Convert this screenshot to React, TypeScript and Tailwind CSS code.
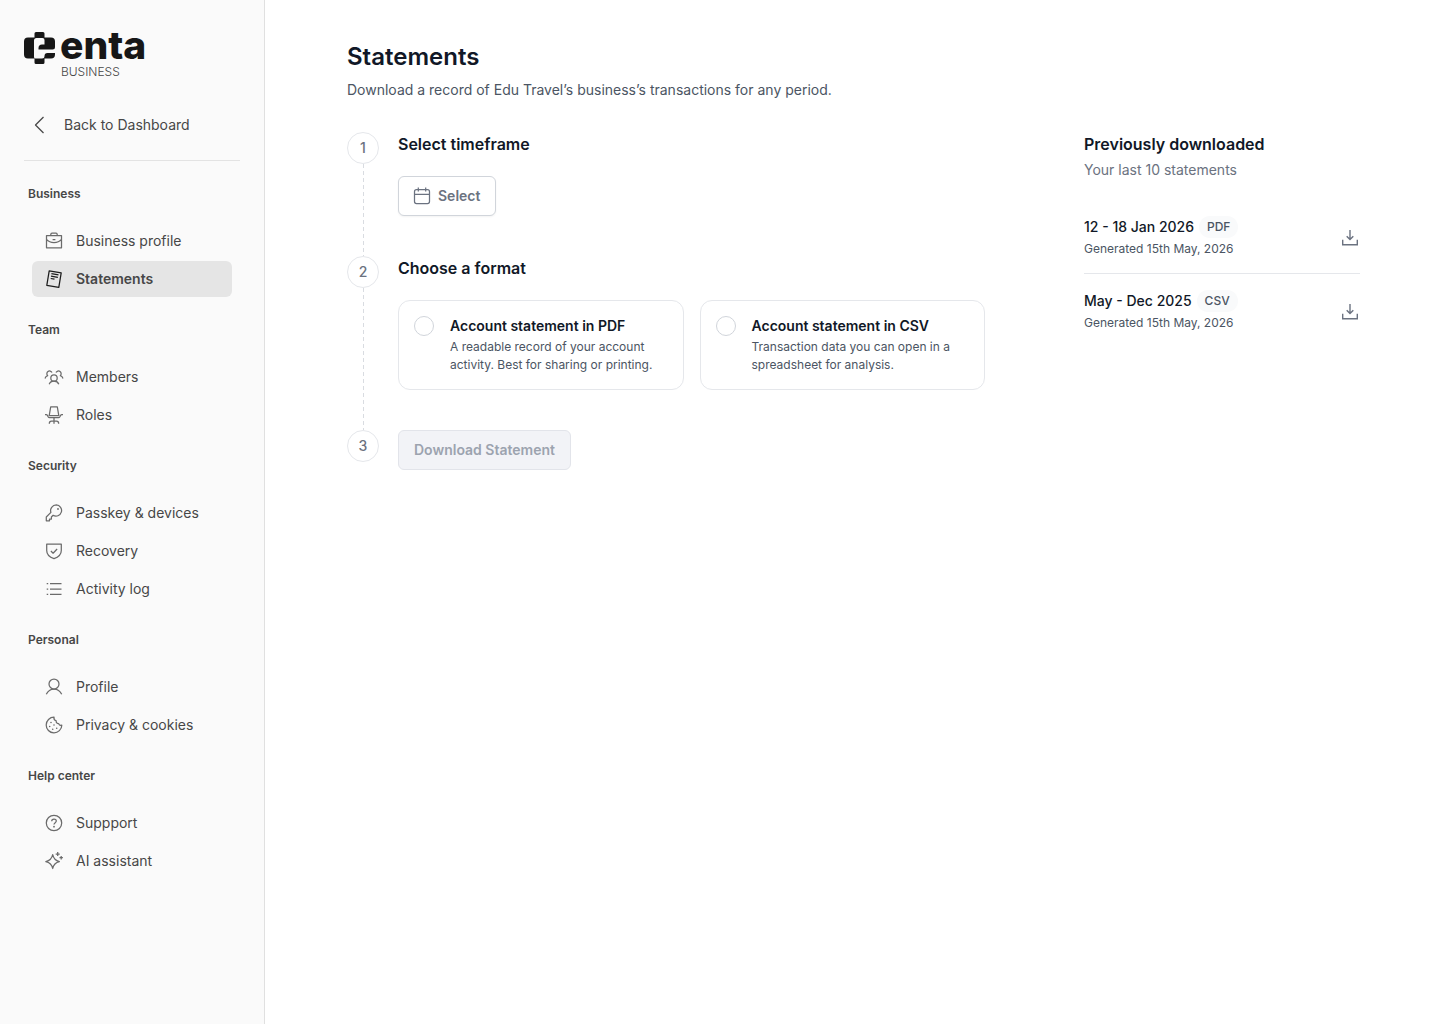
import { useState } from "react";
import type { ReactNode } from "react";

type NavItem = { label: string; icon: ReactNode; active?: boolean };
type NavGroup = { title: string; items: NavItem[] };

function Icon({ children }: { children: ReactNode }) {
  return (
    <svg
      viewBox="0 0 20 20"
      className="size-5 shrink-0"
      fill="none"
      stroke="currentColor"
      strokeWidth="1.25"
      strokeLinejoin="round"
      aria-hidden="true"
    >
      {children}
    </svg>
  );
}

const NAV: NavGroup[] = [
  {
    title: "Business",
    items: [
      {
        label: "Business profile",
        icon: (
          <Icon>
            <path d="M2.5 4.5h15v12.3h-15zM6.8 4.5V3.4c0-.7.5-1.2 1.2-1.2h4c.7 0 1.2.5 1.2 1.2v1.1M2.5 8.3c1.8 2.1 4.4 3.2 7.5 3.2s5.7-1.1 7.5-3.2M8.6 8.7h2.8" />
          </Icon>
        ),
      },
      {
        label: "Statements",
        active: true,
        icon: (
          <Icon>
            <path d="M5.2 1.9 17.2 3.8 14.8 18.3 2.8 16.3zM7.4 4.7l7.1 1.2M7 7.1l6.9 1.2M6.7 9.5l3.8.7" />
          </Icon>
        ),
      },
    ],
  },
  {
    title: "Team",
    items: [
      {
        label: "Members",
        icon: (
          <Icon>
            <circle cx="10" cy="11" r="3.2" />
            <path d="M5.2 17.2c.7-1.9 2.5-3 4.800-3s4.100 1.100 4.800 3M1 11.500c.4-1.500 1.300-2.500 2.700-2.900a2.700 2.700 0 1 1 4.300-3.100M19 11.500c-.4-1.500-1.300-2.500-2.700-2.900a2.700 2.700 0 1 0-4.300-3.100" />
          </Icon>
        ),
      },
      {
        label: "Roles",
        icon: (
          <Icon>
            <path d="M6.7 1.8h6.600l1.500 8.900H5.200zM1 9.500h1.200c.7 0 1 .4 1.300 1l.6 1.300c.3.6.7.9 1.400.9h9c.7 0 1.100-.3 1.400-.9l.6-1.300c.3-.6.6-1 1.300-1H19M10 12.700v6M5.300 18.700c0-1.700.7-2.500 2.200-2.500h5c1.500 0 2.200.8 2.200 2.500" />
          </Icon>
        ),
      },
    ],
  },
  {
    title: "Security",
    items: [
      {
        label: "Passkey & devices",
        icon: (
          <Icon>
            <path d="M12.300 1.900a5.700 5.700 0 0 0-5.400 7.500L2.300 14v3.800h3.200V16h1.900v-2l1.700-1.700a5.600 5.600 0 1 0 3.200-10.400z" />
            <circle cx="14" cy="6" r=".9" fill="currentColor" stroke="none" />
          </Icon>
        ),
      },
      {
        label: "Recovery",
        icon: (
          <Icon>
            <path d="M2.700 3.200h14.600v6.300c0 4-2.700 6.600-7.300 8.200-4.600-1.600-7.300-4.200-7.300-8.200zM6.900 10l2.200 2.200 4-4.200" />
          </Icon>
        ),
      },
      {
        label: "Activity log",
        icon: (
          <Icon>
            <path d="M6 4.600h11.500M6 10h11.500M6 15.400h11.500M2.700 4.600h1.500M2.700 10h1.500M2.700 15.400h1.500" />
          </Icon>
        ),
      },
    ],
  },
  {
    title: "Personal",
    items: [
      {
        label: "Profile",
        icon: (
          <Icon>
            <circle cx="10" cy="7" r="5" />
            <path d="M2.300 17.300C3.800 14 6.500 12 10 12s6.200 2 7.700 5.300" />
          </Icon>
        ),
      },
      {
        label: "Privacy & cookies",
        icon: (
          <Icon>
            <path d="M10 2.200a7.800 7.800 0 1 0 7.800 8c-1.400.4-2.700-.2-3.100-1.600-1.700.1-2.800-1-2.500-2.700C10.600 5.500 9.700 3.900 10 2.200z" />
            <path
              strokeWidth="1.6"
              strokeLinecap="round"
              d="M7 7.500h.01M5.700 11.500h.01M10 10h.01M8.700 14.300h.01M12.700 13.300h.01"
            />
          </Icon>
        ),
      },
    ],
  },
  {
    title: "Help center",
    items: [
      {
        label: "Suppport",
        icon: (
          <Icon>
            <circle cx="10" cy="10" r="7.700" />
            <path d="M7.700 8.200c0-1.300.9-2.200 2.300-2.200s2.300.9 2.300 2.100c0 1.500-2.300 1.700-2.300 3.400" />
            <circle cx="10" cy="13.700" r=".9" fill="currentColor" stroke="none" />
          </Icon>
        ),
      },
      {
        label: "AI assistant",
        icon: (
          <Icon>
            <path d="M8.700 3.700c.8 4 2.500 5.900 6.700 6.900-4.200 1-5.900 2.900-6.700 6.900-.8-4-2.500-5.900-6.900-6.900 4.400-1 6.100-2.900 6.900-6.900zM13.700 1v4M11.700 3h4M17.200 5v3.400M15.500 6.700h3.400" />
          </Icon>
        ),
      },
    ],
  },
];

const FORMATS = [
  {
    id: "pdf",
    title: "Account statement in PDF",
    text: "A readable record of your account activity. Best for sharing or printing.",
  },
  {
    id: "csv",
    title: "Account statement in CSV",
    text: "Transaction data you can open in a spreadsheet for analysis.",
  },
];

const DOWNLOADS = [
  { period: "12 - 18 Jan 2026", format: "PDF", generated: "Generated 15th May, 2026" },
  { period: "May - Dec 2025", format: "CSV", generated: "Generated 15th May, 2026" },
];

function Logo() {
  return (
    <div className="h-12">
      <div className="flex h-8 items-start gap-[5px] text-[#171717]">
        <svg viewBox="0 0 31 32" className="h-8 w-[31px]" fill="currentColor" aria-hidden="true">
          <path d="M12 0h7q1.500 0 1.500 1.500V5.500H27q4 0 4 4V15q0 2.500-2.500 2.500H14.500V16q0-3.500 3.500-3.500h2.500V8q0-2-2-2H12.500Q10 6 10 8.500V25q0 1.500 1.500 1.500H18q2.500 0 2.500-2.500 0-3 3-3H31v1.500q0 4-4 4h-6.500v4Q20.500 32 19 32h-7q-1.500 0-1.500-1.500v-4H4q-4 0-4-4v-13q0-4 4-4h6.500v-4Q10.500 0 12 0z" />
        </svg>
        <span className="text-[39px] leading-[26px] font-extrabold">enta</span>
      </div>
      <div className="pl-[37px] text-xs leading-4 font-light text-[#474747]">BUSINESS</div>
    </div>
  );
}

function Sidebar() {
  return (
    <aside className="w-[265px] shrink-0 border-r border-[#e0e0e0] bg-[#fafafa] px-6 py-8 text-[#474747]">
      <Logo />
      <a href="#" className="mt-[35px] flex h-5 items-center gap-[14px] pl-[6px] text-sm">
        <Icon>
          <path d="M13.500 2 5.500 10l8 8" />
        </Icon>
        Back to Dashboard
      </a>
      <hr className="mt-[25px] mb-[23px] border-[#e3e3e3]" />
      <nav className="flex flex-col gap-[23px]">
        {NAV.map((group) => (
          <section key={group.title}>
            <h2 className="pl-1 text-xs leading-5 font-semibold">{group.title}</h2>
            <ul className="mx-2 mt-[19px] flex flex-col gap-[2px]">
              {group.items.map((item) => (
                <li key={item.label}>
                  <a
                    href="#"
                    className={
                      item.active
                        ? "flex h-9 items-center gap-3 rounded-md bg-[#e5e5e5] pl-3 text-sm font-semibold"
                        : "flex h-9 items-center gap-3 rounded-md pl-3 text-sm"
                    }
                  >
                    <span className={item.active ? "text-[#1c1c1c]" : "text-[#6b6b6b]"}>{item.icon}</span>
                    {item.label}
                  </a>
                </li>
              ))}
            </ul>
          </section>
        ))}
      </nav>
    </aside>
  );
}

// One numbered row; the dashed line runs down to the next number.
function Step({ n, last, children }: { n: number; last?: boolean; children: ReactNode }) {
  return (
    <li className="flex gap-[19px]">
      <div className="flex w-8 shrink-0 flex-col items-center">
        <span className="flex size-8 shrink-0 items-center justify-center rounded-full border border-[#e5e7eb] text-sm font-medium text-[#6b7280]">
          {n}
        </span>
        {!last && (
          <svg className="h-0 w-px grow" aria-hidden="true">
            <line x1="0.5" y1="0" x2="0.5" y2="100%" stroke="#d9dce1" strokeDasharray="4 3" />
          </svg>
        )}
      </div>
      <div className={last ? "min-w-0 grow" : "min-w-0 grow pb-10"}>{children}</div>
    </li>
  );
}

function DownloadIcon() {
  return (
    <svg viewBox="0 0 20 20" className="size-5" fill="none" stroke="currentColor" strokeWidth="1.400" aria-hidden="true">
      <path d="M10 2v9.500M6.700 8.300l3.300 3.300 3.300-3.300M2.700 11.700v5h14.600v-5" />
    </svg>
  );
}

export default function App() {
  const [format, setFormat] = useState("");

  return (
    <div className="flex min-h-screen bg-white font-['Inter',sans-serif]">
      <Sidebar />
      <main className="min-w-0 grow pt-10 pr-20 pb-10 pl-[82px]">
        <h1 className="text-2xl leading-[34px] font-semibold text-[#111827]">Statements</h1>
        <p className="mt-[6px] text-sm leading-5 text-[#4b5563]">
          Download a record of Edu Travel’s business’s transactions for any period.
        </p>

        <div className="mt-8 flex items-start gap-[99px]">
          <ol className="min-w-0 grow">
            <Step n={1}>
              <h2 className="text-base leading-6 font-semibold text-[#111827]">Select timeframe</h2>
              <button className="mt-5 flex h-10 items-center gap-[6px] rounded-md border border-[#d1d5db] bg-white pr-[15px] pl-[13px] text-sm font-semibold text-[#6b7280] shadow-xs">
                <Icon>
                  <path d="M4.500 3.700h11c1.100 0 2 .9 2 2v9.800c0 1.100-.9 2-2 2h-11c-1.100 0-2-.9-2-2V5.700c0-1.100.9-2 2-2zM2.500 8.300h15M6.300 1.500v4M13.700 1.500v4" />
                </Icon>
                Select
              </button>
            </Step>
            <Step n={2}>
              <h2 className="text-base leading-6 font-semibold text-[#111827]">Choose a format</h2>
              <div className="mt-5 grid grid-cols-2 gap-4">
                {FORMATS.map((f) => (
                  <label
                    key={f.id}
                    className="flex items-start gap-4 rounded-xl border border-[#e5e7eb] px-[15px] py-[15px]"
                  >
                    <input
                      type="radio"
                      name="format"
                      value={f.id}
                      checked={format === f.id}
                      onChange={() => setFormat(f.id)}
                      className="size-5 shrink-0 appearance-none rounded-full border border-[#d1d5db] checked:border-[6px] checked:border-[#111827]"
                    />
                    <span className="min-w-0">
                      <span className="block text-sm leading-5 font-semibold text-[#111827]">{f.title}</span>
                      <span className="mt-[2px] block text-xs leading-[18px] text-[#4b5563]">{f.text}</span>
                    </span>
                  </label>
                ))}
              </div>
            </Step>
            <Step n={3} last>
              <button
                disabled={!format}
                className="h-10 rounded-md border border-[#e2e4ea] bg-[#f2f3f7] px-[15px] text-sm font-semibold text-[#9ca3af]"
              >
                Download Statement
              </button>
            </Step>
          </ol>

          <section className="w-[276px] shrink-0">
            <h2 className="text-base leading-6 font-semibold text-[#111827]">Previously downloaded</h2>
            <p className="mt-1 text-sm leading-5 text-[#6b7280]">Your last 10 statements</p>
            <ul className="mt-5 divide-y divide-[#e5e7eb]">
              {DOWNLOADS.map((d) => (
                <li key={d.period} className="flex items-center justify-between pt-4 pb-[14px]">
                  <div>
                    <div className="flex items-center gap-[5px]">
                      <span className="text-sm leading-[22px] font-medium text-[#111827]">{d.period}</span>
                      <span className="rounded-full bg-[#f9fafb] px-2 text-xs leading-[22px] font-medium text-[#4b5563]">
                        {d.format}
                      </span>
                    </div>
                    <p className="mt-px text-xs leading-5 text-[#4b5563]">{d.generated}</p>
                  </div>
                  <button aria-label={`Download ${d.period}`} className="text-[#6b7280]">
                    <DownloadIcon />
                  </button>
                </li>
              ))}
            </ul>
          </section>
        </div>
      </main>
    </div>
  );
}
